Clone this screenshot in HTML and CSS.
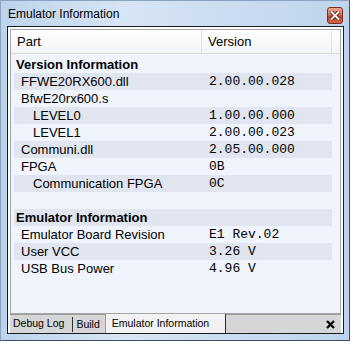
FILE: index.html
```html
<!DOCTYPE html>
<html lang="en">
<head>
  <meta charset="UTF-8" />
  <title>Emulator Information</title>
  <link rel="stylesheet" href="styles.css">
</head>
<body>
  <div class="window">
    <div class="titlebar">
      <span class="title">Emulator Information</span>
      <button class="close-btn">
        <svg width="10" height="9" viewBox="0 0 10 9">
          <path d="M1.5 1 L8.5 8 M8.5 1 L1.5 8" stroke="#5a1e12" stroke-width="3.6" stroke-linecap="square"/>
          <path d="M1.5 1 L8.5 8 M8.5 1 L1.5 8" stroke="#fff" stroke-width="1.8" stroke-linecap="square"/>
        </svg>
      </button>
    </div>

    <div class="panel">
      <div class="list">
        <div class="list-header">
          <div class="hcell part">Part</div>
          <div class="hcell version">Version</div>
          <div class="hcell rest"></div>
        </div>
        <div class="rows">
          <div class="row section"><span class="name">Version Information</span><span class="value"></span></div>
          <div class="row alt lvl1"><span class="name">FFWE20RX600.dll</span><span class="value">2.00.00.028</span></div>
          <div class="row lvl1"><span class="name">BfwE20rx600.s</span><span class="value"></span></div>
          <div class="row alt lvl2"><span class="name">LEVEL0</span><span class="value">1.00.00.000</span></div>
          <div class="row lvl2"><span class="name">LEVEL1</span><span class="value">2.00.00.023</span></div>
          <div class="row alt lvl1"><span class="name">Communi.dll</span><span class="value">2.05.00.000</span></div>
          <div class="row lvl1"><span class="name">FPGA</span><span class="value">0B</span></div>
          <div class="row alt lvl2"><span class="name">Communication FPGA</span><span class="value">0C</span></div>
          <div class="row"><span class="name"></span><span class="value"></span></div>
          <div class="row alt section"><span class="name">Emulator Information</span><span class="value"></span></div>
          <div class="row lvl1"><span class="name">Emulator Board Revision</span><span class="value">E1 Rev.02</span></div>
          <div class="row alt lvl1"><span class="name">User VCC</span><span class="value">3.26 V</span></div>
          <div class="row lvl1"><span class="name">USB Bus Power</span><span class="value">4.96 V</span></div>
        </div>
      </div>

      <div class="tabbar">
        <span class="tab">Debug Log</span>
        <span class="tab sep">Build</span>
        <span class="tab active">Emulator Information</span>
        <span class="tab-close">
          <svg width="9" height="9" viewBox="0 0 9 9">
            <path d="M1 1 L8 8 M8 1 L1 8" stroke="#000" stroke-width="2.2"/>
          </svg>
        </span>
      </div>
    </div>
  </div>
</body>
</html>
```

FILE: styles.css
```css
body {
  margin: 0;
  background: #fff;
  font-family: "Liberation Sans", Arial, sans-serif;
}

.window {
  width: 350px;
  height: 341px;
  box-sizing: border-box;
  border: 1px solid #3c4f66;
  border-top-color: #8aa3c0;
  border-left-color: #8aa3c0;
  background: linear-gradient(to right, #bcd3ec 0%, #d7e5f5 35%, #c9dbf0 70%, #bed4ec 100%);
  display: flex;
  flex-direction: column;
}

/* title bar */
.titlebar {
  height: 25px;
  flex: none;
  display: flex;
  align-items: center;
  padding-left: 7px;
  padding-right: 6px;
}

.title {
  font-size: 12px;
  color: #000;
  flex: 1;
}

.close-btn {
  width: 16px;
  height: 17px;
  padding: 0;
  margin-top: 3px;
  border: 1px solid #7a3020;
  border-radius: 3px;
  background: linear-gradient(#eba693 0%, #d9735b 45%, #c5432a 55%, #d0654b 100%);
  display: flex;
  align-items: center;
  justify-content: center;
}

/* docked panel */
.panel {
  flex: 1;
  margin: 0 5px 6px 6px;
  border: 1px solid #1c1c1c;
  background: #fff;
  padding: 2px 2px 0;
  display: flex;
  flex-direction: column;
}

.list {
  flex: 1;
  border: 1px solid #a5a5a5;
  background: #f0f4fd;
  display: flex;
  flex-direction: column;
}

.list-header {
  height: 23px;
  display: flex;
  background: linear-gradient(#ffffff, #f4f4f4);
  border-bottom: 1px solid #d8d8d8;
  font-size: 13px;
  color: #000;
}

.hcell {
  line-height: 23px;
  padding-left: 6px;
  box-sizing: border-box;
  border-right: 1px solid #e2e2e2;
}

.hcell.part {
  width: 191px;
}

.hcell.version {
  width: 130px;
}

.hcell.rest {
  flex: 1;
  border-right: none;
}

.rows {
  padding: 2px 8px 0 3px;
}

.row {
  height: 17px;
  line-height: 17px;
  display: flex;
  font-size: 13px;
  color: #000;
}

.row.alt {
  background: #e0e5ef;
}

.row .name {
  width: 195px;
  padding-left: 2px;
  box-sizing: border-box;
  white-space: nowrap;
}

.row.section .name {
  font-weight: bold;
}

.row.lvl1 .name {
  padding-left: 7px;
}

.row.lvl2 .name {
  padding-left: 19px;
}

.row .value {
  font-family: "Liberation Mono", "Courier New", monospace;
  font-size: 13px;
}

/* tab strip */
.tabbar {
  height: 18px;
  flex: none;
  display: flex;
  align-items: stretch;
  background: #d6d6d6;
  border-top: 1px solid #9c9c9c;
  font-size: 10.5px;
  color: #000;
}

.tab {
  line-height: 17px;
  padding: 0 4px 0 3px;
}

.tab.sep {
  border-left: 1px solid #303030;
  margin: 2px 0 1px 4px;
  line-height: 14px;
  padding: 0 5px 0 3px;
}

.tab.active {
  background: #f2f2f2;
  margin-top: -1px;
  line-height: 18px;
  padding: 0 16px 0 6px;
  border-left: 1px solid #9c9c9c;
  border-right: 1px solid #2a2a2a;
}

.tab-close {
  margin-left: auto;
  margin-right: 6px;
  display: flex;
  align-items: center;
}
```
